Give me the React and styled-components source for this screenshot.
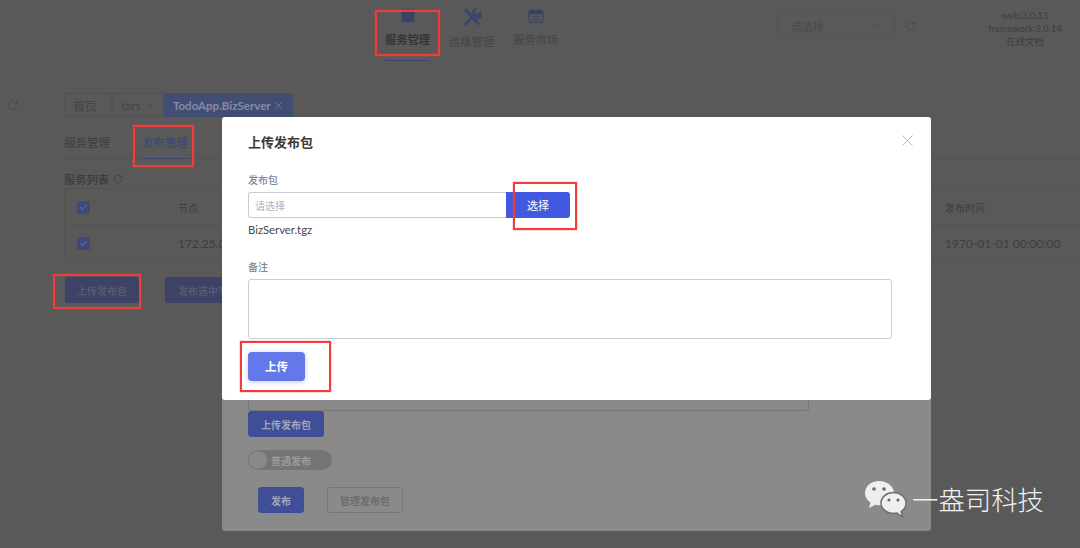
import React from 'react';
import styled, { createGlobalStyle } from 'styled-components';
import { ChevronDown, RotateCw, X, Check } from 'lucide-react';

const FONT = `Lato, "Noto Sans", "Noto Sans CJK SC", sans-serif`;

const nav_items = [
  { id: 'service', label: '服务管理', active: true },
  { id: 'ops', label: '运维管理' },
  { id: 'market', label: '服务市场' },
];

const red_boxes = [
  { id: 'nav', x: 375, y: 10, w: 65, h: 46 },
  { id: 'tab', x: 133, y: 125, w: 61, h: 42 },
  { id: 'pick', x: 513, y: 182, w: 64, h: 48 },
  { id: 'page_btn', x: 53, y: 274, w: 88, h: 35 },
  { id: 'upload', x: 240, y: 341, w: 91, h: 51 },
];

const GlobalStyle = createGlobalStyle`
  html, body {
    margin: 0;
    padding: 0;
    background: #595959;
  }
  * {
    box-sizing: border-box;
  }
`;

const Screen = styled.div`
  position: relative;
  width: 1080px;
  height: 548px;
  overflow: hidden;
  background: #595959;
  color: #3c3c3c;
  font-family: ${FONT};
`;

const Header = styled.header`
  display: flex;
  height: 62px;
  padding-left: 385px;
`;

const Nav = styled.nav`
  display: flex;
  gap: 19px;
`;

const NavItem = styled.div`
  display: flex;
  flex-direction: column;
  align-items: center;
  width: 45px;
  height: 61px;
  font-size: 11.25px;
  line-height: 15px;
  white-space: nowrap;
  font-weight: ${({ $active }) => ($active ? 700 : 500)};
  color: ${({ $active }) => ($active ? '#363636' : '#484848')};
  border-bottom: 1px solid ${({ $active }) => ($active ? '#3c4570' : 'transparent')};

  svg {
    margin-top: 7px;
    margin-bottom: 7px;
  }
`;

const SelectBox = styled.div`
  display: flex;
  align-items: center;
  justify-content: space-between;
  width: 118px;
  height: 25px;
  margin: 13px 0 0 219px;
  padding: 0 12px 0 13px;
  border: 1px solid #545454;
  border-radius: 3px;
  font-size: 11px;
  color: #4b4b4b;
`;

const HeaderRefresh = styled.div`
  display: flex;
  margin: 20px 0 0 10px;
  height: 11px;
  color: #444444;
`;

const Versions = styled.div`
  width: 90px;
  margin: 9px 0 0 64px;
  font-size: 9.5px;
  line-height: 13px;
  text-align: center;
  white-space: nowrap;
  color: #3e3e3e;
`;

const TabsRow = styled.div`
  display: flex;
  align-items: center;
  height: 24px;
  margin-top: 31px;
  padding-left: 7px;
`;

const SideRefresh = styled.div`
  display: flex;
  width: 57px;
  height: 11px;
  color: #464646;
`;

const PageTab = styled.div`
  display: flex;
  align-items: center;
  justify-content: space-between;
  width: ${({ $w }) => $w}px;
  height: 24px;
  padding: 0 8px;
  font-size: ${({ $active }) => ($active ? 11.5 : 12)}px;
  white-space: nowrap;
  color: ${({ $active }) => ($active ? '#858ba3' : '#444444')};
  background: ${({ $active }) => ($active ? '#414d73' : 'transparent')};
  border: 1px solid ${({ $active }) => ($active ? '#414d73' : '#525252')};
  border-radius: ${({ $active }) => ($active ? '0 3px 0 0' : '0')};
  font-weight: ${({ $active }) => ($active ? 700 : 400)};
`;

const SubNav = styled.div`
  display: flex;
  gap: 32px;
  height: 40px;
  margin: 2px 0 0 64px;
  border-bottom: 1px solid #535353;
`;

const SubNavItem = styled.div`
  width: 46px;
  height: 40px;
  padding-top: 16px;
  font-size: 11.5px;
  line-height: 16px;
  white-space: nowrap;
  color: ${({ $active }) => ($active ? '#3c4570' : '#3f3f3f')};
  border-bottom: 1px solid ${({ $active }) => ($active ? '#3c4570' : 'transparent')};
`;

const ListTitle = styled.div`
  display: flex;
  align-items: center;
  gap: 4px;
  height: 18px;
  margin-top: 11px;
  padding-left: 64px;
  font-size: 11.25px;
  font-weight: 500;
  color: #3c3c3c;
`;

const TableBox = styled.div`
  margin-left: 64px;
  width: 1016px;
  border-top: 1px solid #535353;
  border-left: 1px solid #535353;
  border-radius: 3px 0 0 3px;
`;

const TableRow = styled.div`
  display: grid;
  grid-template-columns: 113px 767px 1fr;
  align-items: center;
  height: ${({ $h }) => $h}px;
  font-size: ${({ $head }) => ($head ? 10 : 12)}px;
  color: #3e3e3e;
  border-bottom: 1px solid #535353;
`;

const CheckCell = styled.div`
  display: flex;
  padding-left: 12px;
`;

const CheckBox = styled.span`
  display: flex;
  align-items: center;
  justify-content: center;
  width: 13px;
  height: 13px;
  border-radius: 2px;
  background: #3f4a78;
  color: #7a80a0;
`;

const PageActions = styled.div`
  display: flex;
  gap: 26px;
  margin: 16px 0 0 65px;
`;

const PageButton = styled.div`
  display: flex;
  align-items: center;
  justify-content: center;
  width: ${({ $w }) => $w}px;
  height: 26px;
  border-radius: 3px;
  font-size: 10px;
  font-weight: 700;
  white-space: nowrap;
  color: #555a72;
  background: #3d4266;
`;

const Dialog = styled.div`
  position: absolute;
  left: 222px;
  width: 709px;
`;

const LowerDialog = styled(Dialog)`
  top: 117px;
  height: 414px;
  padding: 278px 26px 0;
  background: #8a8a8a;
  border-radius: 3px;
`;

const LowerInput = styled.div`
  width: 561px;
  height: 16px;
  border: 1px solid #777777;
  border-top: 0;
  border-radius: 0 0 3px 3px;
`;

const LowerButton = styled.div`
  display: flex;
  align-items: center;
  justify-content: center;
  width: ${({ $w }) => $w}px;
  height: 26px;
  border-radius: 3px;
  font-size: 10px;
  font-weight: 700;
  color: ${({ $plain }) => ($plain ? '#6c6c6c' : '#a0a6c0')};
  background: ${({ $plain }) => ($plain ? 'transparent' : '#3f4e96')};
  border: 1px solid ${({ $plain }) => ($plain ? '#777777' : '#3f4e96')};
`;

const LowerSwitch = styled.div`
  display: flex;
  align-items: center;
  gap: 4px;
  width: 84px;
  height: 20px;
  margin-top: 13px;
  padding-left: 1px;
  border-radius: 10px;
  background: #757575;
  font-size: 10px;
  font-weight: 700;
  color: #9b9b9b;

  &::before {
    content: '';
    width: 18px;
    height: 18px;
    border-radius: 50%;
    background: #8a8a8a;
  }
`;

const LowerActions = styled.div`
  display: flex;
  gap: 23px;
  margin: 17px 0 0 10px;
`;

const UploadDialog = styled(Dialog)`
  top: 117px;
  height: 283px;
  padding: 15px 26px 0;
  background: #ffffff;
  border-radius: 3px;
  color: #333333;
`;

const DialogTitle = styled.div`
  font-size: 13px;
  line-height: 20px;
  font-weight: 700;
  color: #3a3a3a;
`;

const CloseIcon = styled.div`
  position: absolute;
  top: 14px;
  right: 14px;
  display: flex;
  color: #a6a6a6;
`;

const FieldLabel = styled.div`
  height: 14px;
  font-size: 10px;
  line-height: 14px;
  font-weight: 500;
  color: #7d8494;
  margin-top: ${({ $top }) => $top}px;
`;

const PickRow = styled.div`
  display: flex;
  width: 322px;
  height: 26px;
  margin-top: 5px;
`;

const PickInput = styled.div`
  flex: 1;
  display: flex;
  align-items: center;
  padding-left: 6px;
  font-size: 10px;
  color: #aab0bd;
  border: 1px solid #c9ccd6;
  border-right: 0;
  border-radius: 3px 0 0 3px;
`;

const PickButton = styled.div`
  display: flex;
  align-items: center;
  justify-content: center;
  width: 64px;
  font-size: 11px;
  color: #ffffff;
  background: #4059e0;
  border-radius: 0 3px 3px 0;
`;

const FileName = styled.div`
  margin-top: 4px;
  font-size: 11.3px;
  line-height: 15px;
  color: #4a4a4a;
`;

const NoteBox = styled.div`
  width: 644px;
  height: 60px;
  margin-top: 5px;
  border: 1px solid #c9ccd6;
  border-radius: 3px;
`;

const UploadButton = styled.div`
  display: flex;
  align-items: center;
  justify-content: center;
  width: 57px;
  height: 29px;
  margin-top: 13px;
  padding-bottom: 1px;
  font-size: 11.5px;
  font-weight: 700;
  color: #ffffff;
  background: #6478ea;
  border-radius: 4px;
  box-shadow: 0 1px 5px rgba(100, 120, 234, 0.4);
`;

const RedBox = styled.div`
  position: absolute;
  border: 2px solid #f23c3c;
  box-shadow: 0 0 1px #f23c3c;
`;

const Watermark = styled.div`
  position: absolute;
  left: 864px;
  top: 480px;
  display: flex;
  align-items: center;
  gap: 5px;
  font-family: "Noto Sans CJK SC", sans-serif;
  font-size: 26.4px;
  font-weight: 300;
  line-height: 38px;
  color: #f2f2f2;
`;

function ChipIcon({ color }) {
  const pins = [3, 6.500, 9.500, 13];
  return (
    <svg width="18" height="18" viewBox="0 0 16 16" fill="none">
      {pins.map((p) => (
        <path
          key={p}
          d={`M${p} 0v16M0 ${p}h16`}
          stroke="#4a5070"
          strokeWidth="0.7"
        />
      ))}
      <rect x="2.500" y="2.500" width="11" height="11" rx="1" fill={color} />
    </svg>
  );
}

function ToolsIcon({ color }) {
  return (
    <svg width="20" height="20" viewBox="0 0 20 20" fill="none">
      <path d="M2 3l2-2 11 12.500 3 3-1.500 2-3.500-3z" fill={color} />
      <path
        d="M18.500 3.500l-3 3-2-.5-.5-2 3-3a5 5 0 0 0-6 6.500L2 17l1.500 2 7.700-7.700a5 5 0 0 0 7.300-7.800z"
        fill={color}
      />
    </svg>
  );
}

function MarketIcon({ color }) {
  return (
    <svg width="18" height="18" viewBox="0 0 20 20" fill="none">
      <rect x="2.500" y="4" width="15" height="13" rx="1.500" stroke={color} strokeWidth="1.500" />
      <path d="M2.500 4h15v4h-15z" fill={color} />
      <path d="M7 2v3M13 2v3M5.500 11h9M5.500 14h9" stroke={color} strokeWidth="1.300" />
    </svg>
  );
}

function WeChatIcon() {
  return (
    <svg width="43" height="38" viewBox="0 0 43 38">
      <path
        d="M15 1C7 1 1 6.500 1 13c0 4 2.200 7.400 5.500 9.600L5 28l6.200-3.200c1.200.3 2.500.5 3.800.5 8 0 15-5.500 15-12.300S23 1 15 1z"
        fill="#efefef"
      />
      <path
        d="M29.500 12.500C22.500 12.500 17 17.200 17 23s5.500 10.500 12.500 10.500c1.200 0 2.300-.2 3.400-.4L38.500 37l-1.300-5.500c3-2 4.800-5 4.800-8.500 0-5.800-5.500-10.500-12.500-10.500z"
        fill="#efefef"
        stroke="#6f6f6f"
        strokeWidth="1.500"
      />
      <circle cx="10" cy="9" r="1.800" fill="#6a6a6a" />
      <circle cx="20" cy="9" r="1.800" fill="#6a6a6a" />
      <circle cx="25" cy="20" r="1.600" fill="#6a6a6a" />
      <circle cx="34" cy="20" r="1.600" fill="#6a6a6a" />
    </svg>
  );
}

const nav_icons = { service: ChipIcon, ops: ToolsIcon, market: MarketIcon };

function App() {
  const nav_elements = nav_items.map((item) => {
    const Icon = nav_icons[item.id];
    return (
      <NavItem key={item.id} $active={item.active}>
        <Icon color={item.id === 'ops' ? '#3c4670' : '#3b4262'} />
        {item.label}
      </NavItem>
    );
  });

  const red_elements = red_boxes.map((box) => (
    <RedBox
      key={box.id}
      style={{ left: box.x, top: box.y, width: box.w, height: box.h }}
    />
  ));

  return (
    <Screen>
      <GlobalStyle />
      <Header>
        <Nav>{nav_elements}</Nav>
        <SelectBox>
          请选择
          <ChevronDown size={12} strokeWidth={1.500} />
        </SelectBox>
        <HeaderRefresh>
          <RotateCw size={11} strokeWidth={1.500} />
        </HeaderRefresh>
        <Versions>
          web:3.0.13
          <br />
          framework:3.0.14
          <br />
          在线文档
        </Versions>
      </Header>

      <TabsRow>
        <SideRefresh>
          <RotateCw size={11} strokeWidth={1.500} />
        </SideRefresh>
        <PageTab $w={48}>首页</PageTab>
        <PageTab $w={52}>
          tars
          <X size={8} strokeWidth={1.500} />
        </PageTab>
        <PageTab $w={129} $active>
          TodoApp.BizServer
          <X size={11} strokeWidth={1.500} />
        </PageTab>
      </TabsRow>

      <SubNav>
        <SubNavItem>服务管理</SubNavItem>
        <SubNavItem $active>发布管理</SubNavItem>
      </SubNav>

      <ListTitle>
        服务列表
        <RotateCw size={10} strokeWidth={1.500} />
      </ListTitle>

      <TableBox>
        <TableRow $h={37} $head>
          <CheckCell>
            <CheckBox>
              <Check size={9} />
            </CheckBox>
          </CheckCell>
          <span>节点</span>
          <span>发布时间</span>
        </TableRow>
        <TableRow $h={35}>
          <CheckCell>
            <CheckBox>
              <Check size={9} />
            </CheckBox>
          </CheckCell>
          <span>172.25.0.3</span>
          <span>1970-01-01 00:00:00</span>
        </TableRow>
      </TableBox>

      <PageActions>
        <PageButton $w={74}>上传发布包</PageButton>
        <PageButton $w={86}>发布选中节点</PageButton>
      </PageActions>

      <LowerDialog>
        <LowerInput />
        <LowerButton $w={76}>上传发布包</LowerButton>
        <LowerSwitch>普通发布</LowerSwitch>
        <LowerActions>
          <LowerButton $w={46}>发布</LowerButton>
          <LowerButton $w={76} $plain>
            管理发布包
          </LowerButton>
        </LowerActions>
      </LowerDialog>

      <UploadDialog>
        <DialogTitle>上传发布包</DialogTitle>
        <CloseIcon>
          <X size={19} strokeWidth={1} />
        </CloseIcon>
        <FieldLabel $top={21}>发布包</FieldLabel>
        <PickRow>
          <PickInput>请选择</PickInput>
          <PickButton>选择</PickButton>
        </PickRow>
        <FileName>BizServer.tgz</FileName>
        <FieldLabel $top={23}>备注</FieldLabel>
        <NoteBox />
        <UploadButton>上传</UploadButton>
      </UploadDialog>

      {red_elements}

      <Watermark>
        <WeChatIcon />
        一盎司科技
      </Watermark>
    </Screen>
  );
}

export default App;
